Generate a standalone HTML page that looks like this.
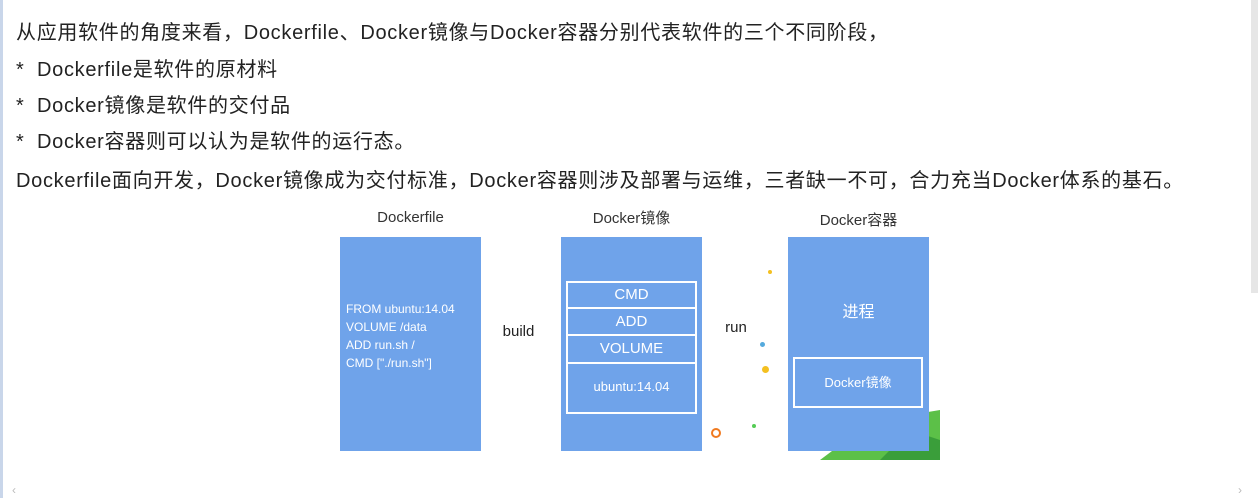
<!DOCTYPE html>
<html><head><meta charset="utf-8"><style>
body{margin:0;width:1258px;height:498px;background:#fff;position:relative;overflow:hidden;font-family:"Liberation Sans","Noto Sans CJK SC",sans-serif;}
.t{position:absolute;left:16px;font-size:20px;letter-spacing:0.7px;color:#222;white-space:nowrap;line-height:22px}
.b{position:absolute;background:#6fa3ea;}
.w{position:absolute;color:#fff;font-size:14px;text-align:center;font-family:"Liberation Sans","Noto Sans CJK SC",sans-serif}
.c{position:absolute;border:2px solid #fff;box-sizing:border-box;color:#fff;text-align:center;font-size:15px}
.h{position:absolute;font-size:15px;color:#333;text-align:center}
.d{position:absolute;border-radius:50%}
</style></head><body>
<div style="position:absolute;left:0;top:0;width:3px;height:498px;background:#c9d6ea"></div>
<div style="position:absolute;left:1251px;top:0;width:7px;height:293px;background:#e6e6e6"></div>
<div class="t" style="top:22px">从应用软件的角度来看，Dockerfile、Docker镜像与Docker容器分别代表软件的三个不同阶段，</div>
<div class="t" style="top:59px">*&nbsp; Dockerfile是软件的原材料</div>
<div class="t" style="top:95px">*&nbsp; Docker镜像是软件的交付品</div>
<div class="t" style="top:131px">*&nbsp; Docker容器则可以认为是软件的运行态。</div>
<div class="t" style="top:170px">Dockerfile面向开发，Docker镜像成为交付标准，Docker容器则涉及部署与运维，三者缺一不可，合力充当Docker体系的基石。</div>

<svg style="position:absolute;left:820px;top:410px" width="120" height="50"><polygon points="0,50 40,20 70,30 90,5 120,0 120,50" fill="#5cc048"/><polygon points="60,50 90,20 120,30 120,50" fill="#3a9e3a"/></svg>
<div class="h" style="left:340px;top:209px;width:141px">Dockerfile</div>
<div class="h" style="left:561px;top:207px;width:141px">Docker镜像</div>
<div class="h" style="left:788px;top:209px;width:141px">Docker容器</div>
<div class="b" style="left:340px;top:237px;width:141px;height:214px"></div>
<div class="w" style="left:346px;top:300px;text-align:left;font-size:12px;line-height:18px;color:#fff">FROM ubuntu:14.04<br>VOLUME /data<br>ADD run.sh /<br>CMD ["./run.sh"]</div>
<div class="h" style="left:496px;top:323px;width:45px;font-size:15px;color:#222">build</div>
<div class="h" style="left:716px;top:319px;width:40px;font-size:15px;color:#222">run</div>
<div class="b" style="left:561px;top:237px;width:141px;height:214px"></div>
<div class="c" style="left:566px;top:281px;width:131px;height:28px;line-height:24px">CMD</div>
<div class="c" style="left:566px;top:307px;width:131px;height:29px;line-height:25px">ADD</div>
<div class="c" style="left:566px;top:334px;width:131px;height:30px;line-height:26px">VOLUME</div>
<div class="c" style="left:566px;top:362px;width:131px;height:52px;line-height:46px;font-size:13px">ubuntu:14.04</div>
<div class="b" style="left:788px;top:237px;width:141px;height:214px"></div>
<div class="w" style="left:788px;top:298px;width:141px;font-size:16px">进程</div>
<div class="c" style="left:793px;top:357px;width:130px;height:51px;line-height:47px;font-size:13px">Docker镜像</div>
<div class="d" style="left:711px;top:428px;width:10px;height:10px;border:2px solid #f07a20;box-sizing:border-box"></div>
<div class="d" style="left:762px;top:366px;width:7px;height:7px;background:#f4c020"></div>
<div class="d" style="left:768px;top:270px;width:4px;height:4px;background:#f4c020"></div>
<div class="d" style="left:760px;top:342px;width:5px;height:5px;background:#5ad"></div>
<div class="d" style="left:752px;top:424px;width:4px;height:4px;background:#5c5"></div>
<div style="position:absolute;left:12px;top:483px;font-size:12px;color:#bbb">‹</div>
<div style="position:absolute;left:1238px;top:483px;font-size:12px;color:#bbb">›</div>
</body></html>
